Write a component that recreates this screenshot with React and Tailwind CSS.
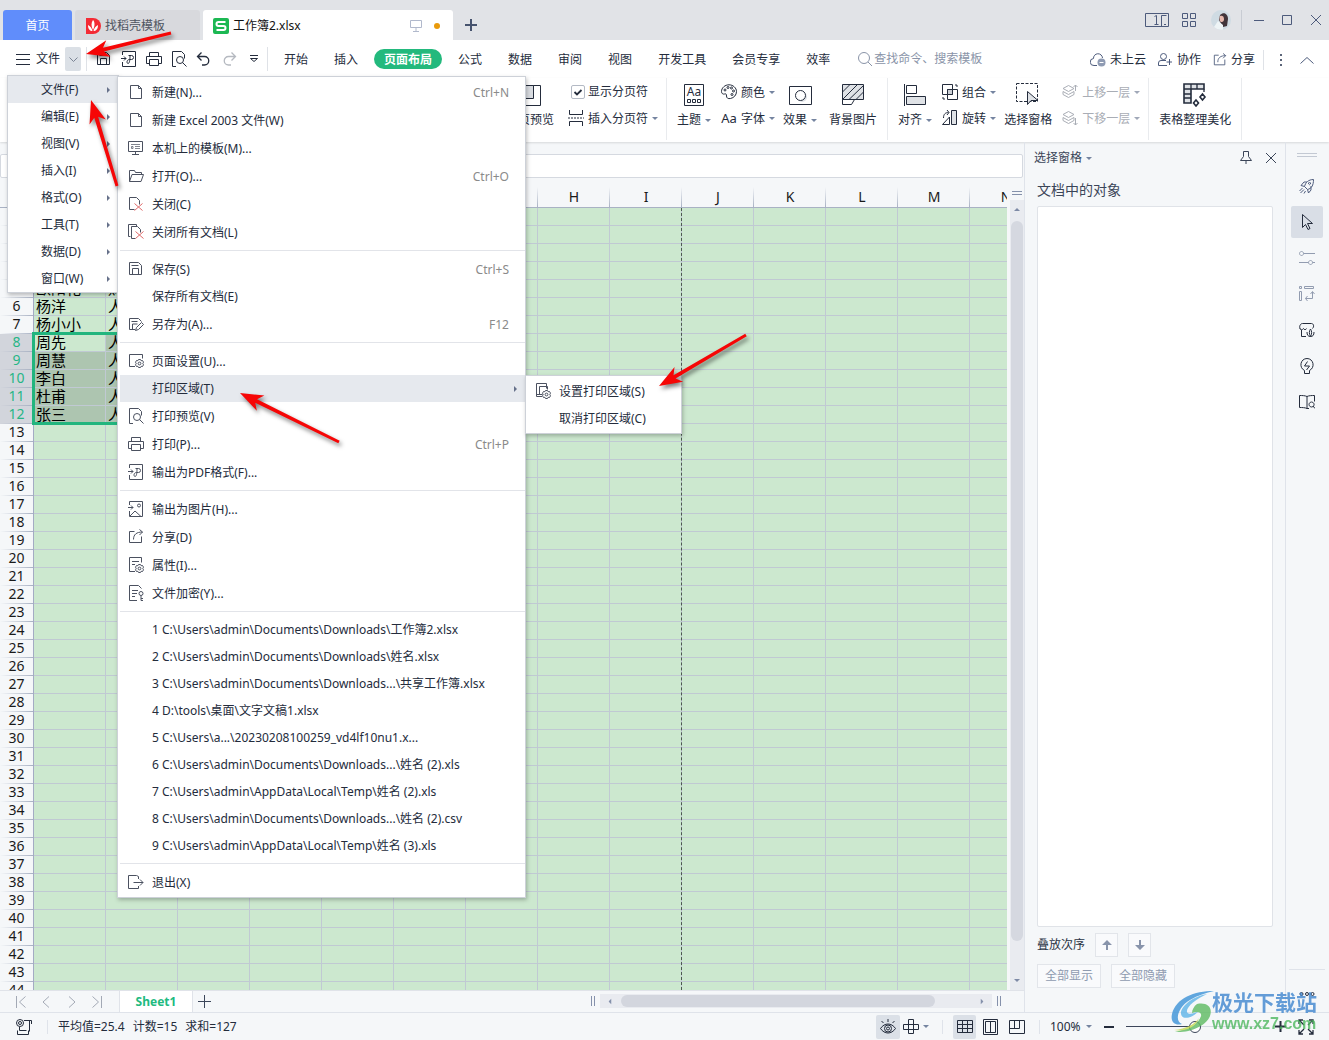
import clsx from 'clsx';

/* ---------- icons ---------- */

const Icon = ({ w = 16, h = 16, box, className = '', children }) => (
  <svg
    width={w}
    height={h}
    viewBox={box || `0 0 ${w} ${h}`}
    fill="none"
    stroke="currentColor"
    strokeWidth="1"
    className={clsx('shrink-0', className)}
    aria-hidden="true"
  >
    {children}
  </svg>
);

const Caret = ({ className = 'text-[#7584a0]' }) => (
  <svg width="6" height="3" viewBox="0 0 6 3" className={clsx('shrink-0', className)} aria-hidden="true">
    <path d="M0 0h6L3 3z" fill="currentColor" />
  </svg>
);

const CaretRight = () => (
  <svg width="3" height="6" viewBox="0 0 3 6" className="shrink-0 text-[#66718a]" aria-hidden="true">
    <path d="M0 0v6l3-3z" fill="currentColor" />
  </svg>
);

const Gear = ({ x, y }) => (
  <g transform={`translate(${x} ${y})`}>
    <path d="M-1-4h2l.6 1.2 1.4-.2 1 1.7-.7 1.3.7 1.3-1 1.7-1.4-.2L1 4h-2l-.6-1.2-1.4.2-1-1.7.7-1.3-.7-1.3 1-1.7 1.4.2z" fill="#fff" />
    <circle r="1.4" />
  </g>
);

const icons = {
  doc: <path d="M2.500 1.500h8l3 3v10h-11zM10.500 1.500v3h3" />,
  template: (
    <>
      <path d="M.5 1.500h14v10H.5zM7.500 11.500v3M4 14.500h7" />
      <path d="M3 4.500h9M7 6.500h5M7 8.500h5M3.500 6.500h1.500v2H3.500z" opacity=".7" />
    </>
  ),
  folder: <path d="M1.500 13.500v-11h5l1 2h6v2M1.500 13.500l2.500-7h11.500l-2.500 7z" />,
  close: (
    <>
      <path d="M6.500 13.500h-5v-12h7l3 3v4" />
      <path d="M6.500 7.500l8 7M14.500 7.500l-8 7" stroke="#e06a6a" />
    </>
  ),
  closeAll: (
    <>
      <path d="M2.500 12.500H.5V.5h8v2M7.500 14.500h-4v-12h6l3 3v3" />
      <path d="M7.500 7.500l8 7M15.500 7.500l-8 7" stroke="#e06a6a" />
    </>
  ),
  save: <path d="M1.500 1.500h9l3 3v9h-12zM4.500 13.500v-6h6v6M3.500 4.500h7" />,
  saveAs: <path d="M7 13.500H1.500v-11h9l3 3M4.500 13.500V8h5M3.500 5.500h6M7.500 14.500l1-3 5-5 2 2-5 5z" />,
  pageSetup: (
    <>
      <path d="M7 13.500H1.500v-12h13v4" />
      <Gear x={11.5} y={10.5} />
    </>
  ),
  preview: (
    <>
      <path d="M5 15.500H1.500V.5h9l3 3v4" />
      <circle cx="9" cy="9" r="3.500" />
      <path d="M11.500 11.500l4 4" />
    </>
  ),
  print: <path d="M3.500 5V1.500h9V5M3.500 12.500H.5v-7h15v7h-3M3.500 8.500h9v6h-9z" />,
  pdf: <path d="M1.500 4V.5h13v15h-13V11M0 7.500h5M3 5.500l2 2-2 2M7.500 4.500h3a2 2 0 0 1 0 4h-2c-3 0-3 4-1.500 4s2-3 2-8" />,
  image: (
    <>
      <path d="M1.500 4V.5h13v15h-13V10M0 6.500h5M3 4.500l2 2-2 2M2 15l5-5 6 5.500" />
      <circle cx="11" cy="4.500" r="1.500" />
    </>
  ),
  share: <path d="M6.500 2.500h-5v11h12v-6M5.500 10.500c0-5 3-7.500 9-7.500M11.500.5l3 2.500-3 3" />,
  props: (
    <>
      <path d="M7 14.500H1.500V.5h12v5M4 4.500h7M4 7.500h3" />
      <Gear x={11.5} y={11.5} />
    </>
  ),
  lock: (
    <>
      <path d="M9 15.500H1.500V.5h9l3 3M4 5.500h6M4 8.500h5M4 11.500h3" />
      <circle cx="13" cy="8.500" r="2" />
      <path d="M13 10.500v5M13 13.500h2M13 15.500h2" />
    </>
  ),
  exit: <path d="M10.500 5V2.500l-2-1h-8v13h10V12M5.500 8.500H15M12 5.500l3 3-3 3" />,
  printArea: (
    <>
      <path d="M7 13.500H1.500V.5h10v5M4.500 11.500v-8h8v3M1.500 11.500h6" />
      <Gear x={11.5} y={11.5} />
    </>
  ),
};

const MenuIcon = ({ name, className }) => (
  <Icon w={16} h={16} className={className}>
    {icons[name]}
  </Icon>
);

/* ---------- title bar ---------- */

const TitleBar = () => (
  <header className="flex h-10 shrink-0 items-end bg-[#e1e3e7] pl-[3px]">
    <button className="h-[30px] w-[69px] rounded-t-[3px] bg-[#608dfb] pt-[2px] text-[12px] text-white">首页</button>
    <button className="ml-[3px] flex h-[30px] w-[125px] items-center gap-1 rounded-t-[3px] bg-[#d8d9dd] pt-[2px] pl-[11px] text-[12px] text-[#4f5561]">
      <svg width="15" height="16" viewBox="0 0 15 16" aria-hidden="true">
        <path d="M0 0h7a8 8 0 0 1 0 16H0z" fill="#f42b35" />
        <path d="M7 2c2 2 2 6 0 10C5 8 5 5 7 2zM2 7c2 1 4 3 4.500 6C4 13 2 11 2 7zM12 7c-2 1-4 3-4.500 6C10 13 12 11 12 7z" fill="#fff" />
      </svg>
      找稻壳模板
    </button>
    <div className="ml-[3px] flex h-[30px] w-[250px] items-center rounded-t-[3px] bg-white pt-[2px] pr-[13px] pl-[10px]">
      <svg width="16" height="16" viewBox="0 0 16 16" aria-hidden="true">
        <rect width="16" height="16" rx="2" fill="#1cb853" />
        <path d="M12.500 4H5.500a1.500 1.500 0 0 0 0 4h5a1.500 1.500 0 0 1 0 4h-7" fill="none" stroke="#fff" strokeWidth="2" />
      </svg>
      <span className="ml-1 text-[12px] text-[#111]">工作簿2.xlsx</span>
      <Icon w={12} h={12} className="ml-auto text-[#b1b9cc]">
        <path d="M.5.500h11v7H.5zM6 8v3M3 11.500h6" />
      </Icon>
      <span className="ml-3 size-[6px] rounded-full bg-[#e99a0b]" />
    </div>
    <button className="ml-3 flex h-[30px] items-center text-[#46536e]" aria-label="新建标签">
      <Icon w={12} h={12}>
        <path d="M6 0v12M0 6h12" strokeWidth="2" />
      </Icon>
    </button>

    <div className="ml-auto flex h-10 items-center text-[#4d5b7c]">
      <Icon w={24} h={14}>
        <path d="M.5.500h23v13H.5zM16.500 13.500v-11h5M9.500 3.500l2-1v9M9.500 11.500h4M19 11.500h2" />
      </Icon>
      <Icon w={14} h={14} className="ml-[13px]">
        <path d="M.5.500h5v5h-5zM8.500.500h5v5h-5zM.5 8.500h5v5h-5zM8.500 8.500h5v5h-5z" />
      </Icon>
      <svg width="20" height="20" viewBox="0 0 20 20" className="ml-[15px]" aria-label="头像">
        <circle cx="10" cy="10" r="10" fill="#cfdbe3" />
        <path d="M9 5c4-4 8-1 8 4l-1 7-4 1-4-7z" fill="#41343a" />
        <path d="M9 6c2-1 4 0 4 3s-2 3-3 3-2-3-1-6z" fill="#e6b9ae" />
        <path d="M3 17l4-6 5 4v4.500a10 10 0 0 1-9-2.500z" fill="#eef4f6" />
      </svg>
      <span className="ml-[10px] h-5 w-px bg-[#c8ccd3]" />
      <button className="ml-[12px]" aria-label="最小化">
        <Icon w={10} h={10}><path d="M0 5.500h10" /></Icon>
      </button>
      <button className="ml-[18px]" aria-label="最大化">
        <Icon w={10} h={10}><path d="M.5.500h9v9h-9z" /></Icon>
      </button>
      <button className="mr-2 ml-[19px]" aria-label="关闭">
        <Icon w={10} h={10}><path d="M0 0l10 10M10 0L0 10" /></Icon>
      </button>
    </div>
  </header>
);

/* ---------- menu bar ---------- */

const tabs = ['开始', '插入', '页面布局', '公式', '数据', '审阅', '视图', '开发工具', '会员专享', '效率'];

const MenuBar = () => (
  <nav className="flex h-[38px] shrink-0 items-center bg-white pr-[15px] pl-4 text-[12px] text-[#242c3c]">
    <button className="flex items-center gap-[6px]">
      <Icon w={14} h={11}>
        <path d="M0 .5h14M0 5.500h14M0 10.500h14" />
      </Icon>
      文件
    </button>
    <button className="ml-[5px] flex h-6 w-4 items-center justify-center rounded-[2px] bg-[#dbe0e6] text-[#7b8494]" aria-label="展开菜单">
      <Icon w={9} h={5}><path d="M.5.500l4 4 4-4" /></Icon>
    </button>
    <span className="ml-[5px] h-6 w-px bg-[#dfe2e7]" />
    <div className="ml-[9px] flex items-center gap-[9px]">
      <button aria-label="保存"><MenuIcon name="save" /></button>
      <button aria-label="输出为PDF"><MenuIcon name="pdf" /></button>
      <button aria-label="打印"><MenuIcon name="print" /></button>
      <button aria-label="打印预览"><MenuIcon name="preview" /></button>
      <button aria-label="撤销">
        <Icon><path d="M5.500 1.500l-4 4 4 4M1.500 5.500h7a4 4 0 0 1 0 8.500H6" strokeWidth="1.300" /></Icon>
      </button>
      <button className="text-[#b5b9c0]" aria-label="恢复">
        <Icon><path d="M10.500 1.500l4 4-4 4M14.500 5.500h-7a4 4 0 0 0 0 8.500H10" strokeWidth="1.300" /></Icon>
      </button>
      <button className="ml-1" aria-label="更多">
        <Icon w={8} h={8}><path d="M0 .5h8M.5 3.500h7l-3.500 3z" /></Icon>
      </button>
    </div>
    <span className="ml-[9px] h-6 w-px bg-[#dfe2e7]" />
    <div className="ml-[6px] flex gap-[6px]">
      {tabs.map((t) => (
        <button
          key={t}
          className={clsx(
            'h-5 rounded-full px-[10px] pt-[2px] leading-[18px] whitespace-nowrap',
            t === '页面布局' && 'bg-[#23b97d] font-bold text-white'
          )}
        >
          {t}
        </button>
      ))}
    </div>
    <label className="ml-[18px] flex items-center gap-[2px] text-[#8a94a8]">
      <Icon w={14} h={14}>
        <circle cx="6" cy="6" r="5.500" />
        <path d="M10 10l4 4" />
      </Icon>
      <input className="w-[120px] bg-transparent outline-none placeholder:text-[#8a94a8]" placeholder="查找命令、搜索模板" aria-label="查找命令" />
    </label>

    <div className="ml-auto flex items-center pt-[2px] whitespace-nowrap">
      <button className="flex items-center gap-1">
        <Icon w={16} h={14}>
          <path d="M7 12.500H4a3.500 3.500 0 0 1-.5-7 4.500 4.500 0 0 1 9-.5" stroke="#4d5b7c" />
          <circle cx="11.500" cy="9.500" r="4" fill="#8f9bb3" stroke="none" />
          <path d="M9.500 9.500h4" stroke="#fff" />
        </Icon>
        未上云
      </button>
      <button className="ml-3 flex items-center gap-[5px]">
        <Icon w={14} h={14} className="text-[#4d5b7c]">
          <circle cx="5.500" cy="3.500" r="3" />
          <path d="M8 7.500H3a2.500 2.500 0 0 0-2.500 2.500v2.500H9M11.500 6v6M8.500 9h6" />
        </Icon>
        协作
      </button>
      <button className="ml-3 flex items-center gap-1">
        <Icon w={14} h={14} box="0 0 16 16" className="text-[#4d5b7c]">{icons.share}</Icon>
        分享
      </button>
      <span className="ml-[8px] h-5 w-px bg-[#dfe2e7]" />
      <button className="ml-4 text-[#5b6579]" aria-label="选项">
        <svg width="2" height="12" viewBox="0 0 2 12" fill="currentColor"><path d="M0 0h2v2H0zM0 5h2v2H0zM0 10h2v2H0z" /></svg>
      </button>
      <button className="ml-[18px] text-[#4d5b7c]" aria-label="收起功能区">
        <Icon w={14} h={7}><path d="M.5 6.500l6.500-6 6.500 6" /></Icon>
      </button>
    </div>
  </nav>
);

/* ---------- ribbon ---------- */

const BigButton = ({ icon, label, caret, className }) => (
  <button className={clsx('flex flex-col items-center gap-1 whitespace-nowrap', className)}>
    <span className="flex h-[24px] items-center">{icon}</span>
    <span className="flex h-[18px] items-center gap-1">
      {label}
      {caret && <Caret />}
    </span>
  </button>
);

const SmallButton = ({ icon, label, disabled }) => (
  <button disabled={disabled} className={clsx('flex h-[18px] items-center gap-1 whitespace-nowrap', disabled && 'text-[#a9adb5]')}>
    {icon}
    <span className="pt-[2px]">{label}</span>
    <Caret className={disabled ? 'text-[#a0a8b8]' : 'text-[#7584a0]'} />
  </button>
);

const RibbonSep = ({ className }) => <span className={clsx('h-[62px] w-px shrink-0 self-start bg-[#e9ebee]', className)} />;

const Layers = ({ up }) => (
  <Icon w={16} h={16}>
    <path d="M6.500 1.500L1 4.500l5.500 3 5.500-3zM1 7.500l5.500 3 5.500-3M1 7.500v3l5.500 3 5.500-3v-3" />
    {up ? <path d="M13.500 7V1M11.500 3l2-2 2 2" /> : <path d="M13.500 8v7M11.500 13l2 2 2-2" />}
  </Icon>
);

const Ribbon = () => (
  <div className="flex h-16 shrink-0 overflow-hidden bg-white pl-[506px] text-[12px] text-[#242c3c] shadow-[0_1px_2px_rgba(0,0,0,0.12)]">
    <BigButton
      className="mt-[5px]"
      label="分页预览"
      icon={
        <Icon w={22} h={21}>
          <path d="M.5.500h21v20H.5z" />
          <path d="M4.500.500h10v13h-10z" fill="#d9dce1" />
        </Icon>
      }
    />
    <div className="mt-[5px] ml-[14px] flex flex-col gap-2">
      <label className="ml-[3px] flex h-[18px] items-center gap-[3px] whitespace-nowrap">
        <span className="relative flex size-[14px]">
          <input type="checkbox" defaultChecked className="size-[14px] appearance-none rounded-[2px] border border-[#b4bac5] bg-white" />
          <Icon w={14} h={14} className="pointer-events-none absolute inset-0">
            <path d="M3.500 7l2.500 2.500L10.500 5" strokeWidth="1.800" />
          </Icon>
        </span>
        显示分页符
      </label>
      <SmallButton
        label="插入分页符"
        icon={
          <Icon w={16} h={16}>
            <path d="M1.500 0v4.500h13V0M1.500 16v-4.500h13V16" />
            <path d="M0 8h16" strokeDasharray="2 1" />
          </Icon>
        }
      />
    </div>
    <RibbonSep className="ml-2" />
    <BigButton
      className="mt-[5px] ml-[10px]"
      label="主题"
      caret
      icon={
        <Icon w={20} h={22}>
          <path d="M.5.500h19v21H.5zM3.500 15.500h3v3h-3zM8.500 15.500h3v3h-3zM13.500 15.500h3v3h-3z" />
          <text x="10" y="12" textAnchor="middle" fontSize="12" fill="currentColor" stroke="none">Aa</text>
        </Icon>
      }
    />
    <div className="mt-[5px] ml-[10px] flex flex-col gap-2">
      <SmallButton
        label="颜色"
        icon={
          <Icon w={16} h={16}>
            <path d="M8 .8c-4 0-7.500 3-7.500 6.700 0 2 1.500 3 3 2.500s2 0 2 2c0 2 1.500 3 4 2.500 3.500-.7 6-3.500 6-7S12 .8 8 .8z" />
            <circle cx="4" cy="6" r="1" /><circle cx="7" cy="3.500" r="1" /><circle cx="10.500" cy="4" r="1" /><circle cx="12.500" cy="7" r="1" /><circle cx="11" cy="10.500" r="1" />
          </Icon>
        }
      />
      <SmallButton label="字体" icon={<span className="w-4 pt-[2px] text-[13px]">Aa</span>} />
    </div>
    <BigButton
      className="mt-[5px] ml-2"
      label="效果"
      caret
      icon={
        <Icon w={23} h={19}>
          <path d="M.5.500h22v18H.5z" />
          <circle cx="13" cy="11" r="5" fill="#dfe2e6" stroke="none" />
          <circle cx="11.500" cy="9.500" r="5" fill="#fff" />
        </Icon>
      }
    />
    <BigButton
      className="mt-[5px] ml-3"
      label="背景图片"
      icon={
        <Icon w={22} h={22}>
          <path d="M.5.500h21v15H.5z" fill="#dfe2e6" />
          <path d="M.5 8L8 .500M.5 15.500l15-15M7 15.500l14.500-14M14 15.500l7.500-7.500M.5 15.500v5h9l3-5" />
        </Icon>
      }
    />
    <RibbonSep className="ml-[10px]" />
    <BigButton
      className="mt-[5px] ml-[10px]"
      label="对齐"
      caret
      icon={
        <Icon w={22} h={22}>
          <path d="M.5 0v22M2.500 1.500h10v8h-10z" />
          <path d="M2.500 12.500h19v8h-19z" fill="#dfe2e6" />
        </Icon>
      }
    />
    <div className="mt-[5px] ml-[10px] flex flex-col gap-2">
      <SmallButton
        label="组合"
        icon={
          <Icon w={16} h={16}>
            <path d="M.5.500h10v10H.5z" />
            <path d="M5.500 5.500h10v10h-10z" />
            <path d="M5.500 5.500h5v5h-5z" fill="#cdd1d7" />
            <path d="M1 13v2h2M13 1h2v2" />
          </Icon>
        }
      />
      <SmallButton
        label="旋转"
        icon={
          <Icon w={16} h={16}>
            <path d="M9.500.500h5v14h-5z" fill="#dfe2e6" />
            <path d="M7.500 7L.5 14.500h7zM1.500 8c0-4 2-5.500 5-5.500M5 0l2 2.500L5 5" />
          </Icon>
        }
      />
    </div>
    <BigButton
      className="mt-[5px] ml-2"
      label="选择窗格"
      icon={
        <Icon w={24} h={24}>
          <path d="M.5.500h21v18H.5z" strokeDasharray="3 1.500" />
          <path d="M11.500 8.500v13l3.500-4h7z" fill="#dfe2e6" />
        </Icon>
      }
    />
    <div className="mt-[5px] ml-[10px] flex flex-col gap-2">
      <SmallButton disabled label="上移一层" icon={<Layers up />} />
      <SmallButton disabled label="下移一层" icon={<Layers />} />
    </div>
    <RibbonSep className="ml-2" />
    <BigButton
      className="mt-[5px] ml-[10px]"
      label="表格整理美化"
      icon={
        <Icon w={24} h={24}>
          <path d="M1 1h20v5H1zM1 6h7v14H1z" fill="#dfe2e6" strokeWidth="1.600" />
          <path d="M21 6v3M8 1v5M14 1v5M1 11h7M1 15h7" strokeWidth="1.300" />
          <path d="M19.500 11l2.500 3-2.500 3-2.500-3zM13 17l2.500 3-2.500 3-2.500-3z" strokeWidth="1.600" />
        </Icon>
      }
    />
    <RibbonSep className="ml-[10px]" />
  </div>
);

/* ---------- sheet ---------- */

const columns = 'ABCDEFGHIJKLMN'.split('');
const rowCount = 44;
const cellData = {
  5: ['欧阳花', '财务部'],
  6: ['杨洋', '人事部'],
  7: ['杨小小', '人事部'],
  8: ['周先', '人事部'],
  9: ['周慧', '人事部'],
  10: ['李白', '人事部'],
  11: ['杜甫', '人事部'],
  12: ['张三', '人事部'],
};

const isSelected = (row, col) => row >= 8 && row <= 12 && col < 3;

const Sheet = () => (
  <div className="relative min-h-0 min-w-0 flex-1 overflow-hidden">
    <table className="w-[1042px] table-fixed border-separate border-spacing-0">
      <colgroup>
        <col className="w-[34px]" />
        {columns.map((c) => (
          <col key={c} className="w-[72px]" />
        ))}
      </colgroup>
      <thead>
        <tr className="h-[21px] text-[14px] leading-5 text-[#1a1a1a]">
          <td className="border-b border-[#a9b2c4] bg-[#f5f7f9] p-0" />
          {columns.map((c) => (
            <th
              key={c}
              scope="col"
              className="border-b border-[#a9b2c4] bg-[#f5f7f9] bg-[linear-gradient(to_bottom,transparent,#a9b2c4)] bg-[length:1px_100%] bg-right bg-no-repeat p-0 font-normal"
            >
              {c}
            </th>
          ))}
        </tr>
      </thead>
      <tbody>
        {Array.from({ length: rowCount }, (_, i) => i + 1).map((row) => (
          <tr key={row} className="h-[18px] leading-[17px]">
            <th
              scope="row"
              className={clsx(
                'border-r border-[#a4abc4] bg-[linear-gradient(to_right,transparent,#a9b2c4)] bg-[length:100%_1px] bg-bottom bg-no-repeat p-0 pb-[2px] text-[14px] leading-4 font-normal',
                row >= 8 && row <= 12 ? 'bg-[#d2d5dc] text-[#27b586]' : 'bg-[#f5f7f9] text-[#1a1a1a]'
              )}
            >
              {row}
            </th>
            {columns.map((c, col) => (
              <td
                key={c}
                className={clsx(
                  'overflow-hidden border-r border-b border-[#c0c9d3] p-0 pl-[2px] text-[15px] whitespace-nowrap text-black',
                  isSelected(row, col) && !(row === 8 && col === 0) ? 'bg-[#adc5b0]' : 'bg-[#cce8cf]'
                )}
              >
                {cellData[row]?.[col]}
              </td>
            ))}
          </tr>
        ))}
      </tbody>
    </table>
    {/* selection frame and page break */}
    <div className="absolute top-[145px] left-[32px] h-[93px] w-[219px] border-3 border-[#22b57e]" />
    <div className="absolute top-[21px] bottom-0 left-[681px] border-l border-dashed border-[#4c5a50]" />
  </div>
);

const FormulaBar = () => (
  <div className="flex h-[45px] shrink-0 items-start pt-3 pr-px">
    <input aria-label="编辑栏" className="h-6 min-w-0 flex-1 rounded-[2px] border border-[#d5d9e0] bg-white px-2 text-[12px] outline-none" />
  </div>
);

const VerticalScroll = () => (
  <div className="ml-[3px] flex w-[14px] shrink-0 flex-col items-center">
    <Icon w={10} h={4} className="mt-1 mb-[5px] text-[#8591ab]"><path d="M0 .5h10M0 3.500h10" /></Icon>
    <div className="flex w-full flex-1 flex-col items-center bg-[#e9ebf0] py-2">
      <Caret className="rotate-180 text-[#7e8aa6]" />
      <div className="mt-[10px] mb-[38px] w-3 flex-1 rounded-full bg-[#d5d8e0]" />
      <Caret className="text-[#7e8aa6]" />
    </div>
  </div>
);

const SheetTabs = () => (
  <div className="flex h-[22px] shrink-0 items-center border-t border-[#e0e3e9] pl-4 text-[#a3a9b5]">
    <button aria-label="首张"><Icon w={10} h={12}><path d="M.5 0v12M9.500.500L3.500 6l6 5.500" /></Icon></button>
    <button className="ml-4" aria-label="上一张"><Icon w={8} h={12}><path d="M7 .5L1 6l6 5.500" /></Icon></button>
    <button className="ml-[18px]" aria-label="下一张"><Icon w={8} h={12}><path d="M1 .5L7 6l-6 5.500" /></Icon></button>
    <button className="ml-4" aria-label="末张"><Icon w={10} h={12}><path d="M9.500 0v12M.5.500L6.500 6l-6 5.500" /></Icon></button>
    <button className="ml-[17px] h-full w-[74px] border-x border-[#e0e3e9] bg-white text-[12px] font-bold text-[#21ba80]">Sheet1</button>
    <button className="ml-[5px] text-[#3c465a]" aria-label="新建工作表"><Icon w={13} h={13}><path d="M6.500 0v13M0 6.500h13" /></Icon></button>
    <div className="ml-auto flex items-center pb-px text-[#8591ab]">
      <Icon w={4} h={10}><path d="M.5 0v10M3.500 0v10" /></Icon>
      <div className="ml-[5px] flex h-[14px] w-[392px] items-center bg-[#e9ebf0] px-[7px]">
        <Caret className="rotate-90" />
        <div className="ml-2 h-3 w-[314px] rounded-full bg-[#d3d6de]" />
        <Caret className="ml-auto -rotate-90" />
      </div>
      <Icon w={4} h={10} className="mr-[23px] ml-[5px]"><path d="M.5 0v10M3.500 0v10" /></Icon>
    </div>
  </div>
);

/* ---------- selection pane ---------- */

const SelectionPane = () => (
  <aside className="flex w-[261px] shrink-0 flex-col border-l border-[#dfe3ea] pr-3 pl-3 text-[#3b4558]">
    <div className="-ml-[3px] flex h-8 items-center text-[12px]">
      <button className="flex items-center gap-1">
        选择窗格
        <Caret />
      </button>
      <button className="ml-auto" aria-label="固定">
        <Icon w={14} h={14}><path d="M4.500.500h5v5l3 4H1.500l3-4zM7 9.500V13" /></Icon>
      </button>
      <button className="mr-[-4px] ml-3" aria-label="关闭窗格">
        <Icon w={12} h={12}><path d="M1 1l10 10M11 1L1 11" /></Icon>
      </button>
    </div>
    <h2 className="mt-1 h-7 text-[14px] leading-6">文档中的对象</h2>
    <div className="flex-1 rounded-[2px] border border-[#e0e3e8] bg-white" />
    <div className="mt-[6px] flex items-center text-[12px] text-[#2b3445]">
      叠放次序
      <button className="ml-[10px] flex h-6 w-[23px] items-center justify-center border border-[#e2e5ea] bg-[#f9fafc] text-[#8894ab]" aria-label="上移">
        <svg width="10" height="10" viewBox="0 0 10 10" fill="currentColor"><path d="M5 0l5 5H6v5H4V5H0z" /></svg>
      </button>
      <button className="ml-[10px] flex h-6 w-[23px] items-center justify-center border border-[#e2e5ea] bg-[#f9fafc] text-[#8894ab]" aria-label="下移">
        <svg width="10" height="10" viewBox="0 0 10 10" fill="currentColor"><path d="M5 10l5-5H6V0H4v5H0z" /></svg>
      </button>
    </div>
    <div className="mt-[7px] mb-6 flex gap-[10px] text-[12px] text-[#8f9bb0]">
      <button className="h-6 w-16 border border-[#e2e5ea] bg-[#f9fafc]">全部显示</button>
      <button className="h-6 w-16 border border-[#e2e5ea] bg-[#f9fafc]">全部隐藏</button>
    </div>
  </aside>
);

/* ---------- right tool strip ---------- */

const tools = [
  { name: '快捷', tone: 'text-[#4d5b7c]', art: <path d="M14.500 1.500c-5 0-8 3-9 7l3 3c4-1 6-4 6-10zM5.500 8.500L2 7.500 5 4h3M8.500 11.500l1 3.500L12 12V8M3.500 10l-3 3M5 11.500L1.500 15M6.500 13L5 15.500M10.500 4.500a1 1 0 1 0 .1 0" /> },
  { name: '选择', active: true, tone: 'text-[#242c3c]', art: <path d="M3.500.500v13l3-3 2.500 5 2-1-2.500-5h5z" /> },
  { name: '设置', tone: 'text-[#929cb0]', art: <path d="M4.500 3.500H16M0 12.500h9.500M13.500 12.500H16M2.500 1.500a2 2 0 1 0 .1 0M11.500 10.500a2 2 0 1 0 .1 0" /> },
  { name: '版式', tone: 'text-[#929cb0]', art: <path d="M.5.500h2v2h-2zM5.500.500h9v2h-9zM.5 5.500h2v9h-2zM13.500 6v6.500h-7M11.500 8l2-2.500 2 2.500M8.500 10l-2 2.500 2 2.500" /> },
  { name: '素材', tone: 'text-[#242c3c]', art: <path d="M2.500 8v6.500H7M1.500 7.500c-2-3 0-6 2-6h9c2 0 3 3 1 5M1 6.500c1 2 3 1 3.500 0 .5 1.500 2.500 1.500 3 0M11.500 7c1.500 2 1.500 5 0 7.500-1.500-2.500-1.500-5.500 0-7.500zM8 10c0 3 1 4.500 3.500 4.500M15 10c0 3-1 4.500-3.500 4.500" /> },
  { name: '灵感', tone: 'text-[#242c3c]', art: <path d="M5.500 12.500c-6-3-4-12 2.500-12s8.500 9 2.500 12v3h-5zM8.500 3.500L5.500 8h5l-3 4" /> },
  { name: '查阅', tone: 'text-[#242c3c]', art: <path d="M8 2.500c-2-1-5-1-7.500-1v12c2.500 0 5.500 0 7.500 1zM8 2.500c2-1 5-1 7.500-1v6M8 14.500h2M12.500 8a2.500 2.500 0 1 0 .1 0M14 12l2 2.500" /> },
];

const ToolStrip = () => (
  <div className="flex w-[44px] shrink-0 flex-col items-center border-l border-[#dfe3ea] pt-[11px] pr-[2px]">
    <Icon w={20} h={4} className="mb-[13px] text-[#c3c9d3]"><path d="M0 .5h20M0 3.500h20" /></Icon>
    <div className="flex flex-col gap-1">
      {tools.map((t) => (
        <button
          key={t.name}
          aria-label={t.name}
          className={clsx('flex size-8 items-center justify-center rounded-[2px]', t.tone, t.active && 'bg-[#d9dee6]')}
        >
          <Icon>{t.art}</Icon>
        </button>
      ))}
    </div>
    <span className="mt-auto h-px w-9 bg-[#dfe3ea]" />
    <button className="mt-[22px] mb-4 text-[#242c3c]" aria-label="更多工具">
      <Icon w={16} h={4}><circle cx="2.500" cy="2" r="1.500" /><circle cx="8" cy="2" r="1.500" /><circle cx="13.500" cy="2" r="1.500" /></Icon>
    </button>
  </div>
);

/* ---------- status bar ---------- */

const StatusBar = () => (
  <footer className="flex h-7 shrink-0 items-center border-t border-[#dfe3ea] pl-4 text-[12px] whitespace-nowrap text-[#242c3c]">
    <Icon w={16} h={16}>
      <circle cx="4" cy="4" r="3.500" /><circle cx="4" cy="4" r="1.500" />
      <path d="M8 1.500h7.500V5M13.500 1.500v11M3.500 8v3.500h7M1.500 11.500v4h11v-4" />
    </Icon>
    <span className="ml-[15px] h-[14px] w-px bg-[#dfe3ea]" />
    <p className="ml-[10px] flex gap-2">
      <span>平均值=25.4</span>
      <span>计数=15</span>
      <span>求和=127</span>
    </p>
    <div className="ml-auto flex items-center">
      <button className="flex size-6 items-center justify-center rounded-[2px] bg-[#dbe0e7]" aria-label="护眼模式">
        <Icon>
          <path d="M.5 9.500c4-6 11-6 15 0-4 6-11 6-15 0zM8 0v3M1.500 2l2 2M14.500 2l-2 2" />
          <circle cx="8" cy="9.500" r="3.500" /><circle cx="8" cy="9.500" r="1.500" />
        </Icon>
      </button>
      <button className="ml-[3px] flex items-center gap-1" aria-label="阅读模式">
        <Icon><path d="M5.500.500h5v14h-5zM.5 5.500h15v5H.5z" /></Icon>
        <Caret />
      </button>
      <span className="ml-[13px] h-[14px] w-px bg-[#dfe3ea]" />
      <button className="ml-[10px] flex h-6 w-[23px] items-center justify-center rounded-[2px] bg-[#dbe0e7]" aria-label="普通视图">
        <Icon w={16} h={13}><path d="M.5.500h15v12H.5zM0 4.500h16M0 8.500h16M5.500 0v13M10.500 0v13" /></Icon>
      </button>
      <button className="ml-[7px]" aria-label="分页预览">
        <Icon w={15} h={16}><path d="M.5.500h14v15H.5zM2.500 2.500h10v11h-10zM7.500 2.500v11" /></Icon>
      </button>
      <button className="ml-[11px]" aria-label="页面视图">
        <Icon w={16} h={14}><path d="M.5.500h15v13H.5zM5.500.500v8M.5 8.500h10v-8" /></Icon>
      </button>
      <span className="ml-[14px] h-[14px] w-px bg-[#dfe3ea]" />
      <button className="ml-[10px] flex w-[42px] items-center justify-between">
        100%
        <Caret />
      </button>
      <button className="ml-3" aria-label="缩小"><Icon w={10} h={10}><path d="M0 5h10" strokeWidth="2" /></Icon></button>
      <input
        type="range"
        min="0"
        max="100"
        defaultValue="50"
        aria-label="缩放"
        className="ml-3 h-3 w-[137px] appearance-none bg-[linear-gradient(to_right,#3c465a_50%,#d5dae2_50%)] bg-[length:100%_1px] bg-center bg-no-repeat [&::-webkit-slider-thumb]:size-3 [&::-webkit-slider-thumb]:appearance-none [&::-webkit-slider-thumb]:rounded-full [&::-webkit-slider-thumb]:border [&::-webkit-slider-thumb]:border-[#3c465a] [&::-webkit-slider-thumb]:bg-white"
      />
      <button className="ml-3" aria-label="放大"><Icon w={11} h={11}><path d="M0 5.500h11M5.500 0v11" strokeWidth="2" /></Icon></button>
      <button className="mr-[15px] ml-3" aria-label="全屏">
        <Icon w={16} h={16}><path d="M1 5V1h4M1 1l5 5M11 1h4v4M15 1l-5 5M1 11v4h4M1 15l5-5M15 11v4h-4M15 15l-5-5" strokeWidth="1.300" /></Icon>
      </button>
    </div>
  </footer>
);

/* ---------- drop-down menus ---------- */

const mainMenu = ['文件(F)', '编辑(E)', '视图(V)', '插入(I)', '格式(O)', '工具(T)', '数据(D)', '窗口(W)'];

const fileMenu = [
  [
    { icon: 'doc', label: '新建(N)...', keys: 'Ctrl+N' },
    { icon: 'doc', label: '新建 Excel 2003 文件(W)' },
    { icon: 'template', label: '本机上的模板(M)...' },
    { icon: 'folder', label: '打开(O)...', keys: 'Ctrl+O' },
    { icon: 'close', label: '关闭(C)' },
    { icon: 'closeAll', label: '关闭所有文档(L)' },
  ],
  [
    { icon: 'save', label: '保存(S)', keys: 'Ctrl+S' },
    { label: '保存所有文档(E)' },
    { icon: 'saveAs', label: '另存为(A)...', keys: 'F12' },
  ],
  [
    { icon: 'pageSetup', label: '页面设置(U)...' },
    {
      label: '打印区域(T)',
      sub: [{ icon: 'printArea', label: '设置打印区域(S)' }, { label: '取消打印区域(C)' }],
    },
    { icon: 'preview', label: '打印预览(V)' },
    { icon: 'print', label: '打印(P)...', keys: 'Ctrl+P' },
    { icon: 'pdf', label: '输出为PDF格式(F)...' },
  ],
  [
    { icon: 'image', label: '输出为图片(H)...' },
    { icon: 'share', label: '分享(D)' },
    { icon: 'props', label: '属性(I)...' },
    { icon: 'lock', label: '文件加密(Y)...' },
  ],
  [
    { label: '1 C:\\Users\\admin\\Documents\\Downloads\\工作簿2.xlsx' },
    { label: '2 C:\\Users\\admin\\Documents\\Downloads\\姓名.xlsx' },
    { label: '3 C:\\Users\\admin\\Documents\\Downloads...\\共享工作簿.xlsx' },
    { label: '4 D:\\tools\\桌面\\文字文稿1.xlsx' },
    { label: '5 C:\\Users\\a...\\20230208100259_vd4lf10nu1.x...' },
    { label: '6 C:\\Users\\admin\\Documents\\Downloads...\\姓名 (2).xls' },
    { label: '7 C:\\Users\\admin\\AppData\\Local\\Temp\\姓名 (2).xls' },
    { label: '8 C:\\Users\\admin\\Documents\\Downloads...\\姓名 (2).csv' },
    { label: '9 C:\\Users\\admin\\AppData\\Local\\Temp\\姓名 (3).xls' },
  ],
  [{ icon: 'exit', label: '退出(X)' }],
];

const panel = 'border border-[#cdd1d8] bg-white shadow-[1px_2px_4px_rgba(0,0,0,0.25)]';

const MenuItem = ({ item }) => (
  <li className="relative">
    <button
      className={clsx(
        'flex w-full items-center pr-4 pl-2 text-left whitespace-nowrap',
        item.icon ? 'h-7' : 'h-[27px]',
        item.sub && 'bg-[#e6e9ee]'
      )}
    >
      <span className="mr-2 w-4 text-[#4b5160]">{item.icon && <MenuIcon name={item.icon} />}</span>
      <span className={clsx(item.icon && 'pt-[2px]')}>{item.label}</span>
      {item.keys && <span className="ml-auto pt-[2px] text-[#8a8a8a]">{item.keys}</span>}
      {item.sub && <span className="-mr-2 ml-auto"><CaretRight /></span>}
    </button>
    {item.sub && (
      <ul className={clsx('absolute top-0 left-full w-[157px] p-px', panel)}>
        {item.sub.map((s) => (
          <MenuItem key={s.label} item={s} />
        ))}
      </ul>
    )}
  </li>
);

const Menus = () => (
  <div className="absolute top-[75px] left-[7px] text-[12px] text-[#242c3c]">
    <ul className={clsx('w-[112px]', panel)}>
      {mainMenu.map((m, i) => (
        <li key={m}>
          <button className={clsx('flex h-[27px] w-full items-center justify-between pr-2 pl-[33px]', i === 0 && 'bg-[#e6e9ee]')}>
            {m}
            <CaretRight />
          </button>
        </li>
      ))}
    </ul>
    <div className={clsx('absolute top-px left-[110px] w-[409px] py-px pl-[2px]', panel)}>
      {fileMenu.map((group, i) => (
        <ul key={i} className={clsx(i > 0 && 'mt-1 border-t border-[#e2e4e9] pt-1')}>
          {group.map((item) => (
            <MenuItem key={item.label} item={item} />
          ))}
        </ul>
      ))}
    </div>
  </div>
);

/* ---------- annotations ---------- */

const arrows = [
  { from: [171, 33], to: [86, 54] },
  { from: [117, 186], to: [91, 100] },
  { from: [339, 442], to: [240, 393] },
  { from: [746, 335], to: [659, 386] },
];

const Arrow = ({ from, to }) => {
  const length = Math.hypot(from[0] - to[0], from[1] - to[1]);
  const angle = (Math.atan2(from[1] - to[1], from[0] - to[0]) * 180) / Math.PI;
  return (
    <g transform={`translate(${to[0]} ${to[1]}) rotate(${angle})`}>
      <path d={`M0 0L23-8.500 18-2 ${length}-1.500V1.500L18 2 23 8.500z`} fill="#f60606" />
    </g>
  );
};

const Arrows = () => (
  <svg width="800" height="500" className="pointer-events-none absolute top-0 left-0 drop-shadow-[2px_3px_2px_rgba(0,0,0,0.5)]" aria-hidden="true">
    {arrows.map((a) => (
      <Arrow key={a.to.join()} {...a} />
    ))}
  </svg>
);

const Watermark = () => (
  <div className="pointer-events-none absolute right-3 bottom-[6px] flex items-center opacity-80">
    <svg width="46" height="44" viewBox="0 0 46 44" aria-hidden="true">
      <path d="M44 1C24 1 6 8 2 24c-2 9 4 12 10 10C4 31 8 17 20 10 28 5 36 3 44 1z" fill="#3c93d8" />
      <path d="M37 4C24 6 10 16 11 24c1 6 10 5 18-3-6 3-11 4-12 1-1-5 9-13 20-18z" fill="#5fb4e8" />
      <path d="M27 14c10-2 16 3 13 12C36 36 20 43 5 42c13-3 24-8 26-16 1-4-4-5-9-3 0-3 2-7 5-9z" fill="#5dba61" />
      <path d="M4 40c12-1 21-6 25-12-3 9-13 14-25 12z" fill="#c4d94e" />
    </svg>
    <div className="-ml-1 flex flex-col">
      <span className="text-[21px] leading-6 font-bold text-[#3f86cf]">极光下载站</span>
      <span className="font-['Liberation_Sans'] text-[16px] leading-5 font-bold text-[#4fb860]">www.xz7.com</span>
    </div>
  </div>
);

const App = () => (
  <div className="relative flex h-screen flex-col overflow-hidden bg-[#f5f7f9] font-['Noto_Sans','Noto_Sans_CJK_SC',sans-serif]">
    <TitleBar />
    <MenuBar />
    <Ribbon />
    <main className="flex min-h-0 flex-1">
      <section className="flex min-w-0 flex-1 flex-col">
        <FormulaBar />
        <div className="flex min-h-0 flex-1">
          <Sheet />
          <VerticalScroll />
        </div>
        <SheetTabs />
      </section>
      <SelectionPane />
      <ToolStrip />
    </main>
    <StatusBar />
    <Menus />
    <Arrows />
    <Watermark />
  </div>
);

export default App;
